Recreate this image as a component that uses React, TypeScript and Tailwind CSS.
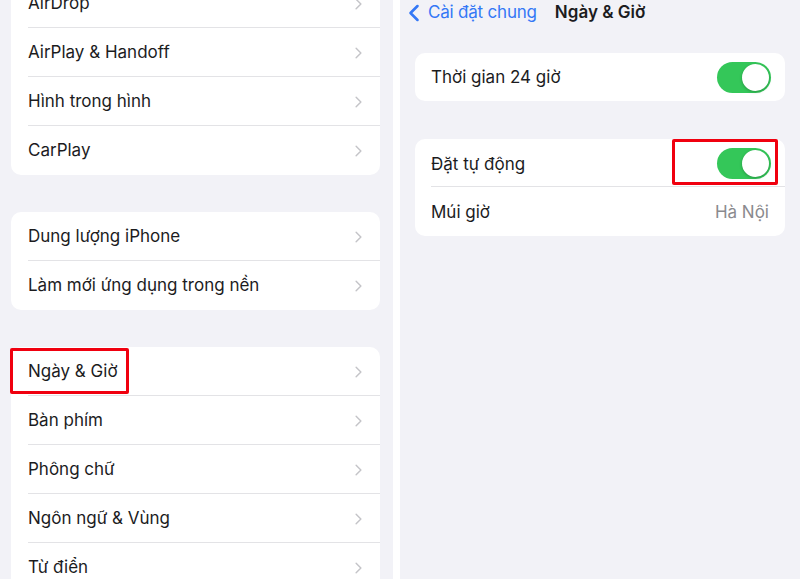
import { ChevronRight, ChevronLeft } from 'lucide-react';

type RowProps = {
  label: string;
  last?: boolean;
  highlight?: boolean;
};

function NavRow({ label, last = false, highlight = false }: RowProps) {
  return (
    <div className="relative flex h-[49px] items-center pl-[17px] pt-[1px]">
      <span className="text-[17px] text-[#1c1c1e]">{label}</span>
      <ChevronRight
        size={19}
        strokeWidth={1.8}
        className="absolute right-[12px] top-1/2 -translate-y-1/2 text-[#c4c4c8]"
      />
      {!last && <div className="absolute bottom-0 left-[17px] right-0 h-px bg-[#e3e3e6]" />}
      {highlight && (
        <div className="absolute left-[-1px] top-[1px] h-[46px] w-[119px] rounded-[2px] border-[3px] border-[#f0000f]" />
      )}
    </div>
  );
}

function Toggle() {
  return (
    <div className="flex h-[31px] w-[54px] items-center justify-end rounded-full bg-[#34c759] p-[2px]">
      <div className="h-[27px] w-[27px] rounded-full bg-white shadow-[0_1px_3px_rgba(0,0,0,0.25)]" />
    </div>
  );
}

export default function App() {
  return (
    <div
      className="flex h-[579px] w-[800px] overflow-hidden bg-white"
      style={{ fontFamily: 'Inter, "Noto Sans", sans-serif' }}
    >
      {/* Left: General settings list */}
      <div className="flex h-full w-[393px] flex-col gap-[37px] bg-[#f2f2f7] pl-[11px] pr-[13px]">
        <div className="-mt-[21px] rounded-[10px] bg-white">
          <NavRow label="AirDrop" />
          <NavRow label="AirPlay & Handoff" />
          <NavRow label="Hình trong hình" />
          <NavRow label="CarPlay" last />
        </div>
        <div className="rounded-[10px] bg-white">
          <NavRow label="Dung lượng iPhone" />
          <NavRow label="Làm mới ứng dụng trong nền" last />
        </div>
        <div className="rounded-[10px] bg-white">
          <NavRow label="Ngày & Giờ" highlight />
          <NavRow label="Bàn phím" />
          <NavRow label="Phông chữ" />
          <NavRow label="Ngôn ngữ & Vùng" />
          <NavRow label="Từ điển" last />
        </div>
      </div>

      <div className="w-[7px] bg-white" />

      {/* Right: Date & Time */}
      <div className="flex h-full flex-1 flex-col bg-[#f2f2f7] px-[15px]">
        <div className="flex h-[25px] items-center">
          <ChevronLeft size={28} strokeWidth={2.2} className="-ml-[15px] text-[#3478f6]" />
          <span className="text-[17px] tracking-[-0.2px] text-[#3478f6]">Cài đặt chung</span>
          <span className="ml-[18px] text-[17px] font-semibold text-[#1c1c1e]">Ngày &amp; Giờ</span>
        </div>

        <div className="mt-[28px] flex h-[48px] items-center justify-between rounded-[10px] bg-white pl-[16px] pr-[14px] pt-[1px]">
          <span className="text-[17px] text-[#1c1c1e]">Thời gian 24 giờ</span>
          <Toggle />
        </div>

        <div className="mt-[38px] rounded-[10px] bg-white">
          <div className="relative flex h-[48px] items-center justify-between pl-[16px] pr-[14px] pt-[1px]">
            <span className="mt-[2px] text-[17px] text-[#1c1c1e]">Đặt tự động</span>
            <Toggle />
            <div className="absolute bottom-0 left-[16px] right-0 h-px bg-[#e3e3e6]" />
            <div className="absolute right-[7px] top-0 h-[46px] w-[106px] rounded-[2px] border-[3px] border-[#f0000f]" />
          </div>
          <div className="flex h-[49px] items-center justify-between pl-[16px] pr-[16px] pt-[2px]">
            <span className="text-[17px] text-[#1c1c1e]">Múi giờ</span>
            <span className="text-[17px] text-[#8a8a8e]">Hà Nội</span>
          </div>
        </div>
      </div>
    </div>
  );
}
